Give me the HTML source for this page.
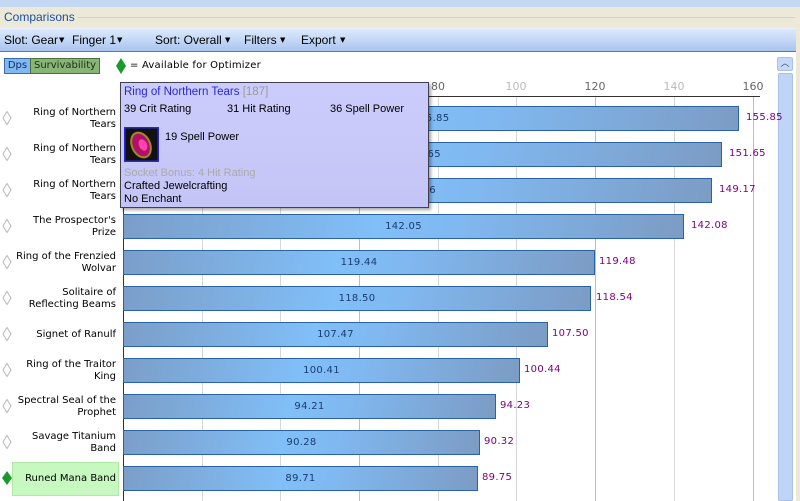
<!DOCTYPE html>
<html><head><style>
*{margin:0;padding:0;box-sizing:border-box}
body{width:800px;height:501px;overflow:hidden;background:#fff;font-family:"DejaVu Sans",Verdana,sans-serif;position:relative}
.a{position:absolute}
.top{left:0;top:0;width:800px;height:7px;background:#c4d8f4}
.beige{left:0;top:7px;width:800px;height:22px;background:#ece9d8}
.cmp{left:4px;top:10px;font:12px "Liberation Sans",sans-serif;color:#1b4ea8;background:#ece9d8;padding-right:3px}
.line{left:70px;top:17px;width:725px;height:1px;background:#d4d0c0}
.tb{left:0;top:28px;width:796px;height:24px;background:linear-gradient(#dce9fc,#c4d8f6 50%,#a9c4ee);border-bottom:1px solid #5a7ab0;border-top:1px solid #e8f0fc}
.tb span{position:absolute;top:4px;font:12px "Liberation Sans",sans-serif;color:#000;white-space:nowrap}
.tb i{position:absolute;top:7px;font-style:normal;font-size:7px;color:#000}
.rb{left:796px;top:28px;width:4px;height:473px;background:#ece9d8}
.grid{width:1px;top:96px;height:405px;background:#d6d6d6}
.gridd{background:#bdbdbd}
.ax{font-size:11px;top:80px;width:40px;text-align:center}
.bar{height:25px;border:1px solid #2a62a8;background:linear-gradient(100deg,#7b9ec8 0%,#80bff8 45%,#80b8f0 60%,#7c9cc4 100%);font-size:10px;color:#1a3c70;text-align:center;line-height:23px;letter-spacing:.3px}
.val{font-size:10px;color:#800080;letter-spacing:.3px}
.lbl{width:108px;text-align:right;font-size:10px;line-height:12px;color:#000;left:8px}
</style></head><body>
<div class="a top"></div>
<div class="a beige"></div>
<div class="a line"></div>
<div class="a cmp">Comparisons</div>
<div class="a tb">
<span style="left:4px">Slot: Gear</span><i style="left:59px">▼</i>
<span style="left:72px">Finger 1</span><i style="left:117px">▼</i>
<span style="left:155px">Sort: Overall</span><i style="left:225px">▼</i>
<span style="left:244px">Filters</span><i style="left:280px">▼</i>
<span style="left:301px">Export</span><i style="left:340px">▼</i>
</div>
<div class="a rb"></div>
<div class="a" style="left:777px;top:57px;width:16px;height:14px;background:#c6d8f8;border:1px solid #a8c0ea;border-radius:2px;font-size:9px;text-align:center;color:#344a7c;line-height:12px">︿</div>
<div class="a" style="left:778px;top:73px;width:15px;height:428px;background:#c0d4f8;border:1px solid #a8c0ea;border-radius:2px"></div>
<div class="a" style="left:4px;top:58px;width:27px;height:16px;background:#80b8f0;border:1px solid #3a6ab0;font-size:10px;text-align:center;line-height:14px;color:#10306a">Dps</div>
<div class="a" style="left:30px;top:58px;width:70px;height:16px;background:#88b478;border:1px solid #4a7040;font-size:10px;text-align:center;line-height:14px;color:#1a3010">Survivability</div>
<svg class="a" style="left:116px;top:58px" width="10" height="16"><polygon points="5,0 10,8 5,16 0,8" fill="#1a9a2a"/></svg>
<div class="a" style="left:130px;top:60px;font-size:10px;letter-spacing:.2px">= Available for Optimizer</div>
<div class="a grid" style="left:202px"></div>
<div class="a grid" style="left:280px"></div>
<div class="a grid gridd" style="left:359px"></div>
<div class="a grid" style="left:438px"></div>
<div class="a grid" style="left:516px"></div>
<div class="a grid gridd" style="left:595px"></div>
<div class="a grid" style="left:674px"></div>
<div class="a grid gridd" style="left:753px"></div>
<div class="a" style="left:123px;top:96px;width:637px;height:1px;background:#333"></div>
<div class="a" style="left:123px;top:96px;width:1px;height:405px;background:#333"></div>
<div class="a ax" style="left:418px;color:#666">80</div>
<div class="a ax" style="left:496px;color:#bbb">100</div>
<div class="a ax" style="left:575px;color:#666">120</div>
<div class="a ax" style="left:654px;color:#bbb">140</div>
<div class="a ax" style="left:733px;color:#666">160</div>
<div class="a" style="left:12px;top:462px;width:107px;height:34px;background:#c6f8c0;border:1px solid #b0e8a8"></div>

<div class="a lbl" style="top:107px">Ring of Northern<br>Tears</div>
<div class="a lbl" style="top:143px">Ring of Northern<br>Tears</div>
<div class="a lbl" style="top:179px">Ring of Northern<br>Tears</div>
<div class="a lbl" style="top:215px">The Prospector's<br>Prize</div>
<div class="a lbl" style="top:251px">Ring of the Frenzied<br>Wolvar</div>
<div class="a lbl" style="top:287px">Solitaire of<br>Reflecting Beams</div>
<div class="a lbl" style="top:329px">Signet of Ranulf</div>
<div class="a lbl" style="top:359px">Ring of the Traitor<br>King</div>
<div class="a lbl" style="top:395px">Spectral Seal of the<br>Prophet</div>
<div class="a lbl" style="top:431px">Savage Titanium<br>Band</div>
<div class="a lbl" style="top:473px">Runed Mana Band</div>

<svg class="a" style="left:2px;top:111px" width="10" height="380">
<g fill="#fff" stroke="#b8b8b8">
<polygon points="5,0.5 9,7 5,13.5 1,7"/>
<polygon transform="translate(0,36)" points="5,0.5 9,7 5,13.5 1,7"/>
<polygon transform="translate(0,72)" points="5,0.5 9,7 5,13.5 1,7"/>
<polygon transform="translate(0,108)" points="5,0.5 9,7 5,13.5 1,7"/>
<polygon transform="translate(0,144)" points="5,0.5 9,7 5,13.5 1,7"/>
<polygon transform="translate(0,180)" points="5,0.5 9,7 5,13.5 1,7"/>
<polygon transform="translate(0,216)" points="5,0.5 9,7 5,13.5 1,7"/>
<polygon transform="translate(0,252)" points="5,0.5 9,7 5,13.5 1,7"/>
<polygon transform="translate(0,288)" points="5,0.5 9,7 5,13.5 1,7"/>
<polygon transform="translate(0,324)" points="5,0.5 9,7 5,13.5 1,7"/>
</g>
<polygon transform="translate(0,360)" points="5,0 10,7 5,14 0,7" fill="#1a9a2a"/>
</svg>

<div class="a bar" style="left:123px;top:106px;width:616px">155.85</div><div class="a val" style="left:746px;top:112px">155.85</div>
<div class="a bar" style="left:123px;top:142px;width:599px">151.65</div><div class="a val" style="left:729px;top:148px">151.65</div>
<div class="a bar" style="left:123px;top:178px;width:589px">149.16</div><div class="a val" style="left:719px;top:184px">149.17</div>
<div class="a bar" style="left:123px;top:214px;width:561px">142.05</div><div class="a val" style="left:691px;top:220px">142.08</div>
<div class="a bar" style="left:123px;top:250px;width:472px">119.44</div><div class="a val" style="left:599px;top:256px">119.48</div>
<div class="a bar" style="left:123px;top:286px;width:468px">118.50</div><div class="a val" style="left:596px;top:292px">118.54</div>
<div class="a bar" style="left:123px;top:322px;width:425px">107.47</div><div class="a val" style="left:552px;top:328px">107.50</div>
<div class="a bar" style="left:123px;top:358px;width:397px">100.41</div><div class="a val" style="left:524px;top:364px">100.44</div>
<div class="a bar" style="left:123px;top:394px;width:373px">94.21</div><div class="a val" style="left:500px;top:400px">94.23</div>
<div class="a bar" style="left:123px;top:430px;width:357px">90.28</div><div class="a val" style="left:484px;top:436px">90.32</div>
<div class="a bar" style="left:123px;top:466px;width:355px">89.71</div><div class="a val" style="left:482px;top:472px">89.75</div>

<div class="a" style="left:120px;top:82px;width:309px;height:126px;background:linear-gradient(#ccccfc,#c4c4f6);border:1px solid #404050;box-shadow:2px 2px 3px rgba(0,0,0,.35);font:11px 'Liberation Sans',sans-serif;color:#000">
<div class="a" style="left:3px;top:3px;color:#2828d8;font-size:11.5px">Ring of Northern Tears <span style="color:#999">[187]</span></div>
<div class="a" style="left:3px;top:20px">39 Crit Rating</div>
<div class="a" style="left:106px;top:20px">31 Hit Rating</div>
<div class="a" style="left:209px;top:20px">36 Spell Power</div>
<svg class="a" style="left:3px;top:44px" width="35" height="35"><rect x="0.5" y="0.5" width="34" height="34" fill="#111" stroke="#2a2ad0" stroke-width="2"/><ellipse cx="17" cy="18" rx="9" ry="13" transform="rotate(-25 17 18)" fill="#b0106a" stroke="#a08a20" stroke-width="2"/><ellipse cx="19" cy="18" rx="4" ry="6" transform="rotate(-25 19 18)" fill="#ff40b0"/></svg>
<div class="a" style="left:44px;top:48px">19 Spell Power</div>
<div class="a" style="left:3px;top:84px;color:#aaa">Socket Bonus: 4 Hit Rating</div>
<div class="a" style="left:3px;top:97px">Crafted Jewelcrafting</div>
<div class="a" style="left:3px;top:110px">No Enchant</div>
</div>
</body></html>
